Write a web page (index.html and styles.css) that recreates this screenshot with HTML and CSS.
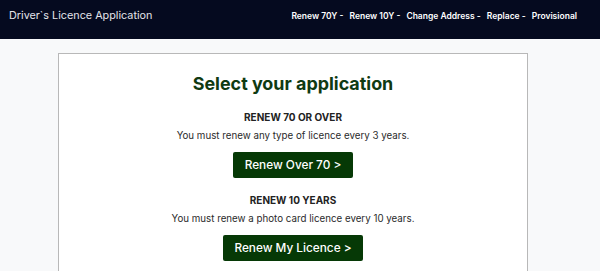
FILE: index.html
```html
<!DOCTYPE html>
<html lang="en">
<head>
    <meta charset="UTF-8">
    <meta name="viewport" content="width=device-width, initial-scale=1.0">
    <title>Driver`s Licence Application</title>
    <link rel="stylesheet" href="styles.css">
</head>
<body>
    <div class="header">
        <div class="brand">Driver`s Licence Application</div>
        <nav class="nav">
            <a href="#">Renew 70Y -</a>
            <a href="#">Renew 10Y -</a>
            <a href="#">Change Address -</a>
            <a href="#">Replace -</a>
            <a href="#">Provisional</a>
        </nav>
    </div>

    <div class="card">
        <h1>Select your application</h1>

        <div class="option">
            <h2>RENEW 70 OR OVER</h2>
            <p>You must renew any type of licence every 3 years.</p>
            <a href="#" class="btn">Renew Over 70 &gt;</a>
        </div>

        <div class="option">
            <h2>RENEW 10 YEARS</h2>
            <p>You must renew a photo card licence every 10 years.</p>
            <a href="#" class="btn">Renew My Licence &gt;</a>
        </div>
    </div>
</body>
</html>
```

FILE: styles.css
```css
body {
    font-family: Inter, "Liberation Sans", Arial, sans-serif;
    margin: 0;
    background-color: #f8f9fa;
    color: #222;
}
.header {
    display: flex;
    justify-content: space-between;
    align-items: center;
    box-sizing: border-box;
    height: 39px;
    padding: 0 23px 8px 9px;
    background-color: #050a1f;
    color: #e4e4ea;
}
.brand {
    font-size: 10.8px;
}
.nav {
    display: flex;
    gap: 6px;
}
.nav a {
    color: white;
    font-size: 8.5px;
    font-weight: 600;
    text-decoration: none;
}
.card {
    width: 468px;
    margin: 14px 0 0 58px;
    background-color: white;
    border: 1px solid #b8b8b8;
    text-align: center;
    padding: 19px 0 20px;
}
h1 {
    font-size: 17.9px;
    line-height: 22px;
    font-weight: 700;
    color: #0f3a12;
    margin: 0 0 16px;
}
.option {
    margin-bottom: 16px;
}
h2 {
    font-size: 10px;
    line-height: 13px;
    font-weight: 700;
    margin: 0 0 5px;
}
.option p {
    font-size: 9.75px;
    line-height: 13px;
    color: #2a2a2a;
    margin: 0 0 10px;
}
.btn {
    display: inline-block;
    padding: 6px 11.5px;
    font-size: 11.8px;
    line-height: 14px;
    font-weight: 500;
    color: white;
    background-color: #063906;
    border-radius: 2px;
    text-decoration: none;
}
```
